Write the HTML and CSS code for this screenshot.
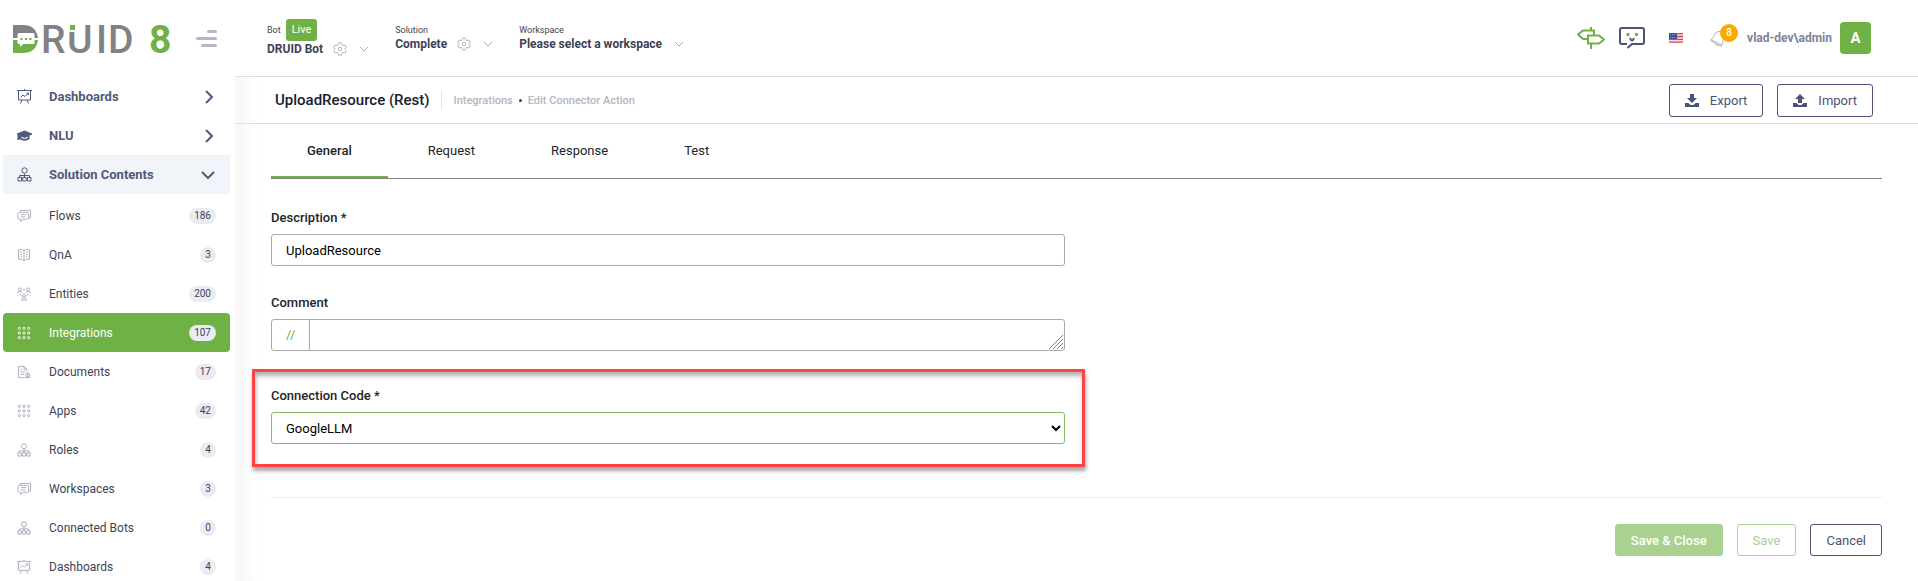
FILE: index.html
```html
<!DOCTYPE html>
<html lang="en">
  <head>
    <meta charset="UTF-8" />
    <meta name="viewport" content="width=device-width, initial-scale=1.0" />
    <title>DRUID - Edit Connector Action</title>
    <link rel="stylesheet" href="styles.css" />
  </head>
  <body>
    <!-- icon sprite -->
    <svg class="sprite" width="0" height="0" aria-hidden="true">
      <symbol id="i-board" viewBox="0 0 15 15">
        <path d="M0 1.500h15M7.500 0v1.500M1.500 1.500v9.500h12V1.500M5 11l-1.500 3.500M10 11l1.500 3.500M3.500 8.500l2.500-2.500 2 1.500 3.500-3.500M9.500 4h2v2" />
      </symbol>
      <symbol id="i-cap" viewBox="0 0 15 15">
        <path d="M0 6l7.500-3L15 6l-7.500 3.500z" fill="currentColor" />
        <path d="M3.500 8v2.500c2 1.500 6 1.500 8 0V8M1.500 7v5" stroke-width="2" />
      </symbol>
      <symbol id="i-tree" viewBox="0 0 15 15">
        <circle cx="7.500" cy="3.500" r="2.700" />
        <path d="M7.500 6.500v4M2.500 10.500v-2h10v2M1 10.500h3.500v3.500H1zM5.700 10.500h3.500v3.500H5.700zM10.500 10.500H14v3.500h-3.500z" />
      </symbol>
      <symbol id="i-chat" viewBox="0 0 15 15">
        <path d="M3.500 3V1.500H14.500v8H12.500M3 3.500h7.500q2 0 2 2V9q0 2-2 2H6l-2 2.500V11H3q-2 0-2-2V5.500q0-2 2-2zM4 6h6M4 8.500h5" />
      </symbol>
      <symbol id="i-book" viewBox="0 0 15 15">
        <path d="M7.500 2.500Q5 1 1.500 2v10q3.500-.5 6 1.500 2.500-2 6-1.500V2Q10 1 7.500 2.500zM7.500 2.500v11M3.500 4.500h2M3.500 7h2M3.500 9.500h2M9.500 4.500h2M9.500 7h2M9.500 9.500h2" />
      </symbol>
      <symbol id="i-people" viewBox="0 0 15 15">
        <circle cx="3" cy="2.500" r="1.500" /><circle cx="12" cy="2.500" r="1.500" /><circle cx="7.500" cy="9.500" r="1.500" />
        <path d="M.5 6.500q0-2 2.500-2t2.500 2M9.500 6.500q0-2 2.500-2t2.500 2M5 14q0-2.500 2.500-2.500T10 14zM6 3h3M3 7l2 3M12 7l-2 3" />
      </symbol>
      <symbol id="i-dots" viewBox="0 0 15 15">
        <g>
          <circle cx="2.500" cy="2.500" r="1.200" /><circle cx="7.500" cy="2.500" r="1.200" /><circle cx="12.500" cy="2.500" r="1.200" />
          <circle cx="2.500" cy="7.500" r="1.200" /><circle cx="7.500" cy="7.500" r="1.200" /><circle cx="12.500" cy="7.500" r="1.200" />
          <circle cx="2.500" cy="12.500" r="1.200" /><circle cx="7.500" cy="12.500" r="1.200" /><circle cx="12.500" cy="12.500" r="1.200" />
        </g>
      </symbol>
      <symbol id="i-doc" viewBox="0 0 15 15">
        <path d="M8 13.500H1.500v-12h6l3 3V7M7.500 1.500v3h3M3.500 5h2M3.500 7.500h5M3.500 10h4" />
        <circle cx="11.500" cy="11" r="2.200" /><path d="M11.500 8v6M8.500 13.500h5.500" />
      </symbol>
      <symbol id="i-gear" viewBox="0 0 16 16">
        <path d="M6.500 1h3l.5 2.200 1.500.9 2.200-.7 1.500 2.600L13.500 7.500v1l1.700 1.500-1.500 2.600-2.200-.7-1.500.9-.5 2.200h-3L6 12.800l-1.500-.9-2.200.7L.8 10l1.700-1.500v-1L.8 6l1.500-2.600 2.200.7L6 3.200z" />
        <circle cx="8" cy="8" r="2" />
      </symbol>
      <symbol id="i-down" viewBox="0 0 10 8">
        <path d="M1 2l4 4 4-4" />
      </symbol>
      <symbol id="i-tray" viewBox="0 0 14 13">
        <path d="M0 9h3.500l2 2h3l2-2H14v4H0z" fill="currentColor" stroke="none" />
      </symbol>
    </svg>

    <div class="app">
      <aside class="sidebar">
        <div class="brand">
          <svg class="logo" width="162" height="56" viewBox="0 -10 162 56" role="img" aria-label="DRUID 8">
            <path d="M0 4h10q13 0 15 13H0z" fill="#808285" />
            <path d="M0 19h25q-2 13-15 13H0z" fill="#6fb144" />
            <path d="M6 12h14q1.500 0 1.500 1.500v8q0 1.500-1.500 1.500h-9.500L7 26v-3H6q-1.500 0-1.500-1.500v-8Q4.500 12 6 12z" fill="#fff" />
            <path d="M7.500 17h2v2h-2zM12 17h2v2h-2zM16.500 17h2v2h-2z" fill="#6fb144" />
            <text class="logo-text" x="28 54 83 95" y="32">RUID</text>
            <path d="M55 2h9v9h-9z" fill="#fff" />
            <path d="M57 4h5v5h-5z" fill="#6fb144" />
            <text class="logo-num" x="136" y="32">8</text>
          </svg>
          <button class="burger" aria-label="Toggle menu"><i></i><i></i><i></i></button>
        </div>
        <nav>
          <ul class="menu">
            <li><a href="#"><svg class="icon"><use href="#i-board" /></svg><span>Dashboards</span><svg class="arrow" viewBox="0 0 14 14"><path d="M5 1l6 6-6 6" /></svg></a></li>
            <li><a href="#"><svg class="icon"><use href="#i-cap" /></svg><span>NLU</span><svg class="arrow" viewBox="0 0 14 14"><path d="M5 1l6 6-6 6" /></svg></a></li>
            <li>
              <a href="#" class="open"><svg class="icon"><use href="#i-tree" /></svg><span>Solution Contents</span><svg class="arrow" viewBox="0 0 14 14"><path d="M1 4l6 6 6-6" /></svg></a>
              <ul class="submenu">
                <li><a href="#"><svg class="icon"><use href="#i-chat" /></svg><span>Flows</span><b>186</b></a></li>
                <li><a href="#"><svg class="icon"><use href="#i-book" /></svg><span>QnA</span><b>3</b></a></li>
                <li><a href="#"><svg class="icon"><use href="#i-people" /></svg><span>Entities</span><b>200</b></a></li>
                <li><a href="#" class="active"><svg class="icon"><use href="#i-dots" /></svg><span>Integrations</span><b>107</b></a></li>
                <li><a href="#"><svg class="icon"><use href="#i-doc" /></svg><span>Documents</span><b>17</b></a></li>
                <li><a href="#"><svg class="icon"><use href="#i-dots" /></svg><span>Apps</span><b>42</b></a></li>
                <li><a href="#"><svg class="icon"><use href="#i-tree" /></svg><span>Roles</span><b>4</b></a></li>
                <li><a href="#"><svg class="icon"><use href="#i-chat" /></svg><span>Workspaces</span><b>3</b></a></li>
                <li><a href="#"><svg class="icon"><use href="#i-tree" /></svg><span>Connected Bots</span><b>0</b></a></li>
                <li><a href="#"><svg class="icon"><use href="#i-board" /></svg><span>Dashboards</span><b>4</b></a></li>
              </ul>
            </li>
          </ul>
        </nav>
      </aside>

      <div class="page">
        <header class="topbar">
          <div class="context">
            <div class="picker">
              <div class="picker-label">Bot <span class="live">Live</span></div>
              <div class="picker-value">DRUID Bot <svg class="gear"><use href="#i-gear" /></svg><svg class="down"><use href="#i-down" /></svg></div>
            </div>
            <div class="picker">
              <div class="picker-label">Solution</div>
              <div class="picker-value">Complete <svg class="gear"><use href="#i-gear" /></svg><svg class="down"><use href="#i-down" /></svg></div>
            </div>
            <div class="picker">
              <div class="picker-label">Workspace</div>
              <div class="picker-value">Please select a workspace <svg class="down"><use href="#i-down" /></svg></div>
            </div>
          </div>
          <div class="tools">
            <svg class="signs" width="28" height="22" viewBox="0 0 28 22">
              <path d="M14 0v3M14 17v5M17 8V3.500H6L1 7.500 6 12h5M11 8.500h11l5 4-5 4H11z" />
            </svg>
            <svg class="bot" width="26" height="22" viewBox="0 0 26 22">
              <path d="M8 17H3q-2 0-2-2V3q0-2 2-2h20q2 0 2 2v12q0 2-2 2H13l-4.500 4" />
              <path d="M11 11q1 2.500 2 2.500t2-2.500" />
              <circle cx="9" cy="7.500" r="1.700" /><circle cx="17.500" cy="7.500" r="1.700" />
            </svg>
            <svg class="flag" width="14" height="10" viewBox="0 0 14 10">
              <path d="M0 0h14v10H0z" fill="#f4dede" />
              <path d="M0 .7h14M0 3.500h14M0 6.300h14M0 9.200h14" stroke="#d8474f" stroke-width="1.300" />
              <path d="M0 0h8v6H0z" fill="#3f4ea5" />
              <path d="M1 1.500h6M1 4.500h6" stroke="#9aa3d8" stroke-dasharray="1 1" />
            </svg>
            <div class="bell">
              <svg width="17" height="18" viewBox="0 0 17 18">
                <path d="M1 10.500L12 16q1-2 1-5l1-4.500Q13 2 8 2.500 5 3 4 7 3 9.500 1 10.500zM1 10.500v1.500l10.500 5.500.5-1.500M5 14q.5 3 4.500 2.500" />
              </svg>
              <span class="count">8</span>
            </div>
            <span class="user">vlad-dev\admin</span>
            <button class="avatar">A</button>
          </div>
        </header>

        <div class="toolbar">
          <h1>UploadResource (Rest)</h1>
          <div class="crumbs"><a href="#">Integrations</a><i></i><a href="#">Edit Connector Action</a></div>
          <div class="toolbar-actions">
            <button class="btn"><svg width="14" height="13" viewBox="0 0 14 13"><use href="#i-tray" /><path d="M5 0h4v4h3L7 9 2 4h3z" fill="currentColor" /></svg>Export</button>
            <button class="btn"><svg width="14" height="13" viewBox="0 0 14 13"><use href="#i-tray" /><path d="M5 9h4V5h3L7 0 2 5h3z" fill="currentColor" /></svg>Import</button>
          </div>
        </div>

        <main>
          <div class="tabs" role="tablist">
            <button role="tab" aria-selected="true">General</button>
            <button role="tab">Request</button>
            <button role="tab">Response</button>
            <button role="tab">Test</button>
          </div>

          <form onsubmit="return false">
            <div class="columns">
              <div class="column">
                <div class="field">
                  <label for="description">Description *</label>
                  <input type="text" id="description" value="UploadResource" />
                </div>
                <div class="field">
                  <label for="comment">Comment</label>
                  <div class="comment">
                    <span>//</span>
                    <textarea id="comment" rows="1"></textarea>
                    <svg class="grip" width="14" height="14" viewBox="0 0 14 14"><path d="M0 14L14 0M4 14L14 4M8 14l6-6M12 14l2-2" /></svg>
                  </div>
                </div>
                <div class="highlight">
                  <div class="field">
                    <label for="connection">Connection Code *</label>
                    <select id="connection">
                      <option>GoogleLLM</option>
                    </select>
                  </div>
                </div>
              </div>
            </div>
            <div class="actions">
              <button class="btn primary" disabled>Save &amp; Close</button>
              <button class="btn outline" disabled>Save</button>
              <button class="btn" type="button">Cancel</button>
            </div>
          </form>
        </main>
      </div>
    </div>
  </body>
</html>
```

FILE: styles.css
```css
* {
  box-sizing: border-box;
}
body {
  margin: 0;
  font-family: Roboto, "Liberation Sans", sans-serif;
  font-size: 13px;
  color: #3f4254;
  background: white;
}
ul {
  list-style: none;
  margin: 0;
  padding: 0;
}
a {
  color: inherit;
  text-decoration: none;
}
button,
input,
select,
textarea {
  font: inherit;
}
svg {
  fill: none;
  stroke: none;
  flex: none;
}
.sprite {
  position: absolute;
}
.app {
  display: flex;
  height: 100vh;
  overflow: hidden;
}

/* sidebar */
.sidebar {
  flex: none;
  width: 235px;
  overflow: hidden;
}
.brand {
  display: flex;
  align-items: center;
  justify-content: space-between;
  height: 77px;
  padding: 0 18px 0 13px;
}
.logo-text,
.logo-num {
  font-size: 39px;
  font-weight: 500;
  fill: #808285;
}
.logo-num {
  font-weight: 700;
  fill: #6fb144;
}
.burger {
  display: flex;
  flex-direction: column;
  align-items: flex-end;
  gap: 4px;
  padding: 0;
  border: none;
  background: none;
}
.burger i {
  width: 21px;
  height: 3px;
  border-radius: 2px;
  background: #b5b5c3;
}
.burger i:first-child {
  width: 10px;
}
.burger i:last-child {
  width: 16px;
}
.menu a {
  display: flex;
  align-items: center;
  height: 39px;
  margin: 0 5px 0 3px;
  padding: 0 14px;
  font-weight: 700;
  color: #50597b;
}
.menu a span {
  flex: 1;
  margin-left: 17px;
}
.menu a.open {
  background: #f1f5f9;
}
.icon {
  width: 15px;
  height: 15px;
  stroke: currentColor;
}
.arrow {
  width: 14px;
  height: 14px;
  margin-right: 1px;
  stroke: #50597b;
  stroke-width: 2;
}
.submenu {
  padding-top: 2px;
}
.submenu a {
  font-size: 12px;
  font-weight: 400;
  color: #3f4254;
}
.submenu .icon {
  width: 14px;
  height: 14px;
  margin-right: 1px;
  color: #a9a9bb;
}
.submenu b {
  min-width: 16px;
  padding: 0 5px;
  border-radius: 8px;
  background: #ebebf3;
  color: #3f4254;
  font-size: 10px;
  font-weight: 400;
  line-height: 16px;
  text-align: center;
}
.submenu a.active {
  background: #6fb144;
  border-radius: 4px;
  color: white;
}
.submenu a.active .icon {
  color: white;
}

/* top bar */
.page {
  flex: 1;
  min-width: 0;
}
.topbar {
  display: flex;
  align-items: center;
  justify-content: space-between;
  height: 77px;
  padding: 0 47px 0 32px;
  border-bottom: 1px solid #dcdfe8;
}
.context {
  display: flex;
  align-items: center;
  gap: 26px;
}
.picker-label {
  display: flex;
  align-items: center;
  gap: 5px;
  font-size: 9px;
  line-height: 12px;
}
.live {
  padding: 0 6px;
  border-radius: 3px;
  background: #6fb144;
  color: white;
  font-size: 11px;
  line-height: 22px;
}
.picker-value {
  display: flex;
  align-items: center;
  font-size: 12px;
  font-weight: 700;
  line-height: 16px;
}
.gear,
.down {
  stroke: #a9a9bb;
}
.gear {
  width: 14px;
  height: 14px;
  margin-left: 10px;
}
.down {
  width: 10px;
  height: 8px;
  margin-left: 12px;
}
.tools {
  display: flex;
  align-items: center;
}
.signs {
  stroke: #6fb144;
  stroke-width: 2;
}
.bot {
  margin-left: 14px;
  stroke: #4b5275;
  stroke-width: 2;
}
.bot circle {
  fill: #6fb144;
  stroke: none;
}
.flag {
  margin-left: 24px;
}
.bell {
  position: relative;
  display: flex;
  margin: 0 20px 0 27px;
}
.bell svg {
  stroke: #b5b5c3;
}
.count {
  position: absolute;
  left: 10px;
  top: -5px;
  width: 18px;
  border-radius: 9px;
  background: #ffa800;
  color: white;
  font-size: 10px;
  font-weight: 500;
  line-height: 18px;
  text-align: center;
}
.user {
  color: #7e8299;
  font-size: 12px;
  font-weight: 700;
}
.avatar {
  width: 31px;
  height: 32px;
  margin-left: 8px;
  padding: 0;
  border: none;
  border-radius: 4px;
  background: #6fb144;
  color: white;
  font-size: 15px;
  font-weight: 700;
}

/* title row */
.toolbar {
  display: flex;
  align-items: center;
  height: 47px;
  padding: 0 45px 0 40px;
  border-bottom: 1px solid #dcdfe8;
  background: linear-gradient(to right, #f7f7f7, white 24px);
}
h1 {
  margin: 0;
  color: #181c32;
  font-size: 15px;
  font-weight: 500;
}
.crumbs {
  display: flex;
  align-items: center;
  height: 20px;
  margin-left: 11px;
  padding-left: 12px;
  border-left: 1px solid #e4e6ef;
  color: #b5b5c3;
  font-size: 11px;
  font-weight: 500;
}
.crumbs i {
  width: 3px;
  height: 3px;
  margin: 0 6px;
  border-radius: 50%;
  background: #3f4254;
}
.toolbar-actions {
  display: flex;
  gap: 14px;
  margin-left: auto;
}
.btn {
  display: flex;
  align-items: center;
  height: 32px;
  padding: 0 15px;
  border: 1px solid #4b5275;
  border-radius: 3px;
  background: white;
  color: #4b5275;
}
.toolbar .btn {
  height: 33px;
}
.btn svg {
  margin-right: 11px;
}

/* content */
main {
  padding: 0 36px;
  height: 100%;
  background: linear-gradient(to right, #f7f7f7, white 24px);
}
.tabs {
  display: flex;
  gap: 4px;
  border-bottom: 1px solid #808285;
}
.tabs button {
  height: 54px;
  padding: 0 36px;
  border: none;
  border-bottom: 2px solid transparent;
  background: none;
  color: #212529;
}
.tabs button[aria-selected="true"] {
  border-color: #6fb144;
  font-weight: 500;
}
.columns {
  display: grid;
  grid-template-columns: 1fr 1fr;
  gap: 23px;
  padding: 31px 0 30px;
  border-bottom: 1px solid #ebedf3;
}
.field + .field {
  margin-top: 29px;
}
.field label {
  display: block;
  margin-bottom: 8px;
  color: #212529;
  font-weight: 500;
  line-height: 16px;
}
.field input,
.field select,
.comment {
  width: 100%;
  height: 32px;
  border: 1px solid #a9a9a9;
  border-radius: 3px;
  background: white;
  color: black;
}
.field input {
  display: block;
  padding: 0 14px;
}
.field select {
  display: block;
  padding: 0 0 0 10px;
  border-color: #84c05c;
}
.comment {
  position: relative;
  display: flex;
}
.comment span {
  padding: 0 14px;
  border-right: 1px solid #a9a9a9;
  color: #6fb144;
  line-height: 30px;
}
.comment textarea {
  flex: 1;
  padding: 6px 14px;
  border: none;
  background: none;
  resize: none;
}
.grip {
  position: absolute;
  right: 1px;
  bottom: 1px;
  stroke: #808080;
}
.highlight {
  margin: 18px -20px 0 -19px;
  padding: 16px 17px 20px 16px;
  border: 3px solid #fb4343;
  box-shadow: 1px 4px 4px rgba(0, 0, 0, 0.35), inset 1px 4px 4px rgba(0, 0, 0, 0.3);
}
.actions {
  display: flex;
  justify-content: flex-end;
  gap: 14px;
  padding-top: 26px;
}
.btn.primary {
  border-color: #a9d18f;
  background: #a9d18f;
  color: white;
  font-weight: 500;
}
.btn.outline {
  border-color: #a9d18f;
  color: #a9d18f;
}
```
